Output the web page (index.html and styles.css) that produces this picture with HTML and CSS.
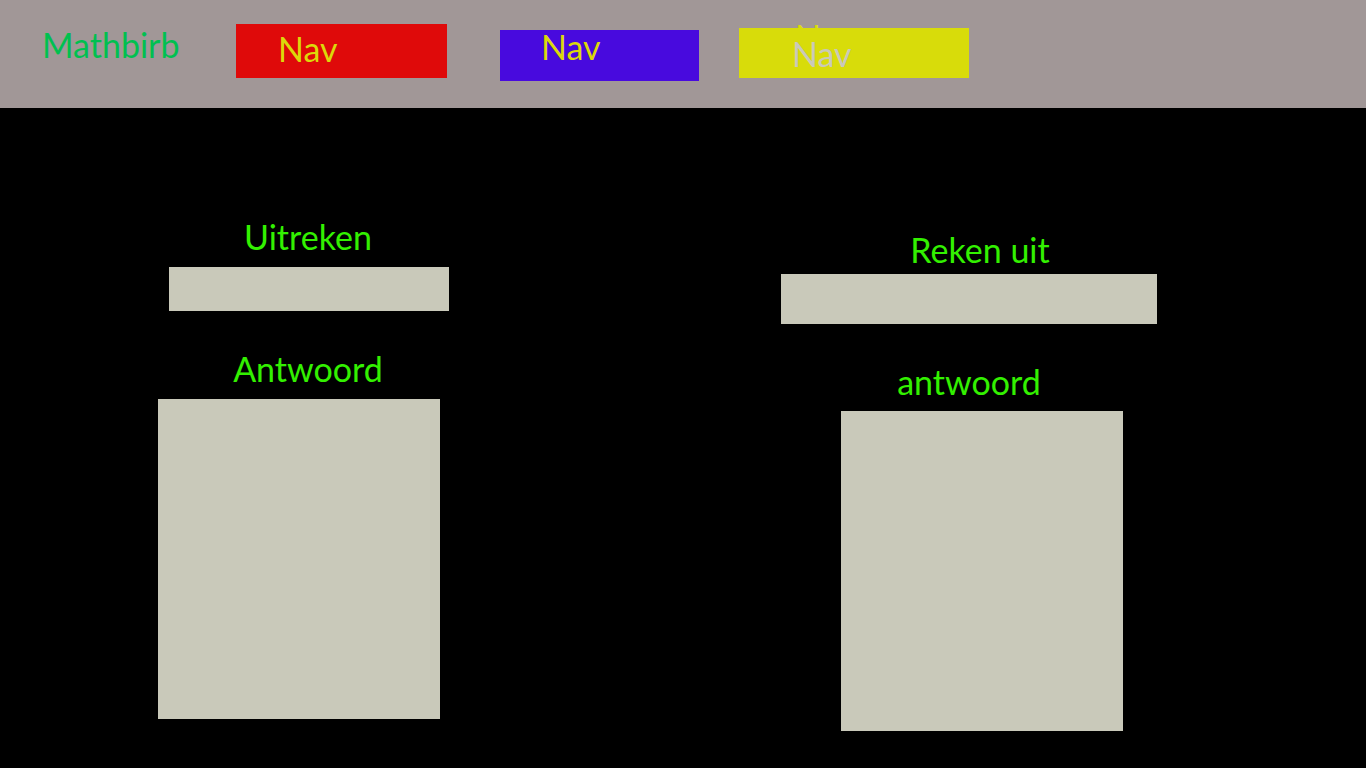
FILE: index.html
```html
<!DOCTYPE html>
<html lang="nl">
<head>
    <meta charset="UTF-8">
    <meta name="viewport" content="width=device-width, initial-scale=1.0">
    <title>Mathbirb</title>
    <link rel="stylesheet" href="styles.css">
</head>
<body>

    <header class="topbar">
        <div class="brand">Mathbirb</div>
        <nav class="menu">
            <a class="nav nav-red" href="#">Nav</a>
            <a class="nav nav-blue" href="#">Nav</a>
            <div class="nav-stack">
                <span class="nav-under">Nav</span>
                <a class="nav nav-yellow" href="#">Nav</a>
            </div>
        </nav>
    </header>

    <main class="calc">
        <section class="col col-left">
            <label class="label" for="som1">Uitreken</label>
            <input class="field field-left" id="som1" type="text">
            <label class="label label-answer" for="ant1">Antwoord</label>
            <textarea class="answer" id="ant1"></textarea>
        </section>

        <section class="col col-right">
            <label class="label label-shift" for="som2">Reken uit</label>
            <input class="field field-right" id="som2" type="text">
            <label class="label label-answer" for="ant2">antwoord</label>
            <textarea class="answer answer-right" id="ant2"></textarea>
        </section>
    </main>

</body>
</html>
```

FILE: styles.css
```css
body {
    margin: 0;
    padding: 0;
    background-color: #000;
    font-family: Lato, "Open Sans", sans-serif;
    font-size: 34px;
    min-height: 768px;
}

/* top bar */
.topbar {
    display: flex;
    align-items: flex-start;
    height: 108px;
    background-color: #a19797;
    padding-left: 42px;
    box-sizing: border-box;
}

.brand {
    width: 194px;
    margin-top: 24px;
    line-height: 42px;
    color: #00c050;
}

.menu {
    display: flex;
    align-items: flex-start;
}

.nav {
    display: block;
    box-sizing: border-box;
    text-decoration: none;
    color: #dcd80a;
}

.nav-red {
    width: 211px;
    height: 54px;
    margin-top: 24px;
    padding-left: 42px;
    line-height: 50px;
    background-color: #df0a0a;
}

.nav-blue {
    width: 199px;
    height: 51px;
    margin-top: 30px;
    margin-left: 53px;
    padding-left: 41px;
    line-height: 34px;
    background-color: #480ade;
    overflow: visible;
}

.nav-stack {
    position: relative;
    width: 230px;
    margin-top: 16px;
    margin-left: 40px;
}

.nav-under {
    display: block;
    padding-left: 56px;
    line-height: 42px;
    color: #d8dc0a;
}

.nav-yellow {
    position: absolute;
    top: 12px;
    left: 0;
    width: 230px;
    height: 50px;
    padding-left: 53px;
    line-height: 52px;
    background-color: #d8dc0a;
    color: #c9c9b9;
}

/* calculator columns */
.calc {
    display: flex;
    align-items: flex-start;
}

.col {
    display: flex;
    flex-direction: column;
    align-items: flex-start;
}

.col-left {
    width: 300px;
    margin-left: 158px;
    padding-top: 108px;
}

.col-right {
    width: 376px;
    margin-left: 323px;
    padding-top: 121px;
}

.label {
    display: block;
    align-self: stretch;
    text-align: center;
    line-height: 42px;
    color: #33f000;
}

.label-shift {
    padding-left: 22px;
}

.label-answer {
    margin-top: 37px;
}

.field,
.answer {
    display: block;
    border: none;
    margin: 0;
    padding: 0;
    background-color: #c9c9ba;
    box-sizing: border-box;
}

.field-left {
    width: 280px;
    height: 44px;
    margin-left: 11px;
    margin-top: 9px;
}

.field-right {
    width: 376px;
    height: 50px;
    margin-top: 3px;
}

.answer {
    width: 282px;
    height: 320px;
    margin-top: 9px;
    resize: none;
}

.answer-right {
    margin-left: 60px;
    margin-top: 8px;
}
```
